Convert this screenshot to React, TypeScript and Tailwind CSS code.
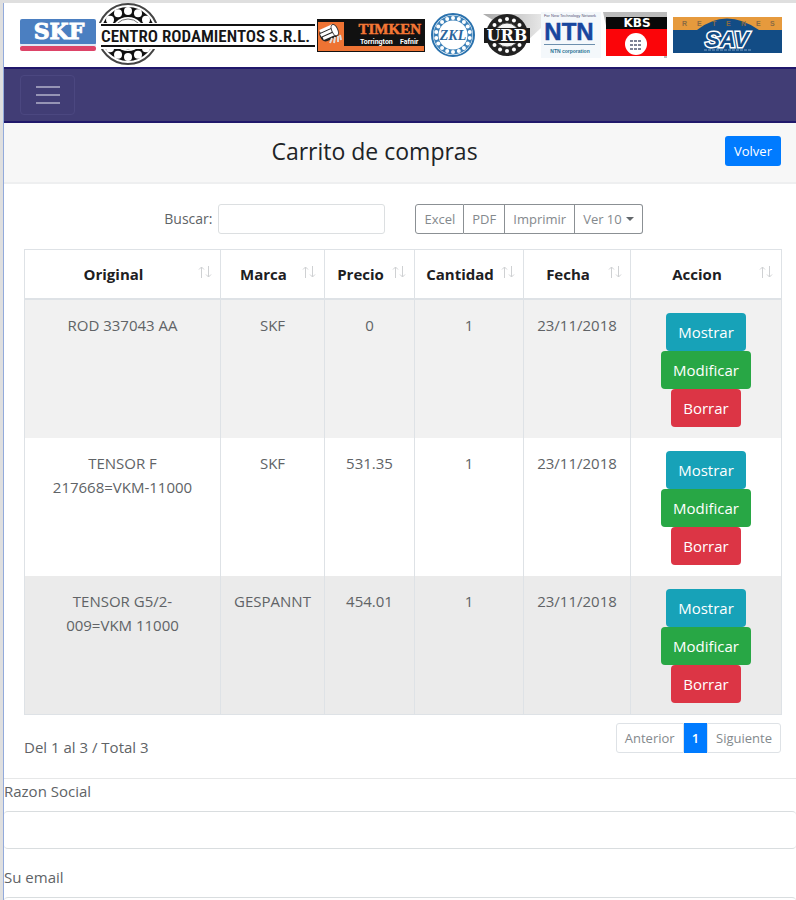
import React from "react";

const rows = [
  { original: ["ROD 337043 AA"], marca: "SKF", precio: "0", cantidad: "1", fecha: "23/11/2018", shade: "bg-[#f1f1f1]" },
  { original: ["TENSOR F 217668=VKM-11000"], marca: "SKF", precio: "531.35", cantidad: "1", fecha: "23/11/2018", shade: "bg-white" },
  { original: ["TENSOR G5/2-", "009=VKM 11000"], marca: "GESPANNT", precio: "454.01", cantidad: "1", fecha: "23/11/2018", shade: "bg-[#ebebeb]" },
];

const columns = [
  { title: "Original", width: "w-[196px]" },
  { title: "Marca", width: "w-[104px]" },
  { title: "Precio", width: "w-[90px]" },
  { title: "Cantidad", width: "w-[109px]" },
  { title: "Fecha", width: "w-[107px]" },
  { title: "Accion", width: "w-[151px]" },
];

type RingProps = { cx: number; cy: number; r: number; count: number; ball: number };

function Balls({ cx, cy, r, count, ball }: RingProps) {
  return (
    <>
      {Array.from({ length: count }, (_, i) => {
        const a = (i / count) * Math.PI * 2 + Math.PI / 2;
        return <circle key={i} cx={cx + r * Math.cos(a)} cy={cy + r * Math.sin(a)} r={ball} fill="#fff" />;
      })}
    </>
  );
}

function SkfLogo() {
  return (
    <svg width="77" height="34" viewBox="0 0 77 34" role="img" aria-label="SKF">
      <rect x="0" y="1" width="76" height="26" rx="2" fill="#4b7fc1" />
      <rect x="0" y="28" width="76" height="5" rx="2" fill="#dd4468" />
      <rect x="0" y="26" width="76" height="2" fill="#dfe9f5" />
      <text x="39" y="21" textAnchor="middle" fontFamily="'DejaVu Serif', serif" fontWeight="700" fontSize="22" fill="#fff" stroke="#fff" strokeWidth="1">SKF</text>
    </svg>
  );
}

function CentroLogo() {
  return (
    <svg width="217" height="66" viewBox="0 0 217 66" role="img" aria-label="Centro Rodamientos S.R.L.">
      <circle cx="29" cy="32" r="30" fill="#fff" stroke="#444" strokeWidth="2" />
      <circle cx="29" cy="32" r="22" fill="none" stroke="#111" strokeWidth="10" />
      <Balls cx={29} cy={32} r={23} count={14} ball={4} />
      <circle cx="29" cy="32" r="15" fill="none" stroke="#777" strokeWidth="1" />
      <rect x="0" y="21" width="217" height="26" fill="#fff" />
      <rect x="2" y="22" width="214" height="2" fill="#111" />
      <rect x="2" y="43" width="214" height="2" fill="#111" />
      <text x="2" y="40" fontFamily="'Roboto Condensed', Roboto, sans-serif" fontWeight="600" fontSize="17" fill="#161616">CENTRO RODAMIENTOS S.R.L.</text>
    </svg>
  );
}

function TimkenLogo() {
  return (
    <svg width="108" height="33" viewBox="0 0 108 33" role="img" aria-label="Timken">
      <rect width="108" height="33" fill="#111" />
      <rect x="1" y="3" width="26" height="26" fill="#ee7333" />
      <rect x="1" y="27" width="106" height="5" fill="#ee7333" />
      <g transform="rotate(-24 14 15)">
        <rect x="3" y="7" width="18" height="13" rx="5" fill="#222" />
        <path d="M5 8h14M4 12h15M5 16h13" stroke="#fff" strokeWidth="3" />
        <ellipse cx="19" cy="13" rx="3" ry="6" fill="#fff" stroke="#333" />
      </g>
      <path d="M13 24l2-5M17 24l1-6M21 23v-6M24 21l-1-5" stroke="#ddd" strokeWidth="2" />
      <text x="104" y="15" textAnchor="end" fontFamily="'Liberation Serif', serif" fontWeight="700" fontSize="15" fill="#f47735" stroke="#f47735" strokeWidth="0.5">TIMKEN</text>
      <text x="43" y="25" fontFamily="Roboto, sans-serif" fontWeight="700" fontSize="7" fill="#fff">Torrington</text>
      <text x="83" y="25" fontFamily="Roboto, sans-serif" fontWeight="700" fontSize="7" fill="#fff">Fafnir</text>
    </svg>
  );
}

function ZklLogo() {
  return (
    <svg width="44" height="44" viewBox="0 0 44 44" role="img" aria-label="ZKL">
      <circle cx="22" cy="22" r="21" fill="#fff" stroke="#2a72ae" strokeWidth="2" />
      <circle cx="22" cy="22" r="17" fill="none" stroke="#3e82b9" strokeWidth="5" />
      <Balls cx={22} cy={22} r={17} count={18} ball={2} />
      <text x="22" y="27" textAnchor="middle" fontFamily="'Liberation Serif', serif" fontStyle="italic" fontWeight="700" fontSize="14" fill="#2a659c">ZKL</text>
    </svg>
  );
}

function UrbLogo() {
  return (
    <svg width="58" height="46" viewBox="0 0 58 46" role="img" aria-label="URB">
      <defs>
        <linearGradient id="urbShade" x1="0" x2="1" y1="0" y2="0">
          <stop offset="0" stopColor="#aaa" />
          <stop offset="1" stopColor="#e6e6e6" />
        </linearGradient>
      </defs>
      <path d="M0 2H58V16L44 29Z" fill="url(#urbShade)" />
      <circle cx="24" cy="23" r="21" fill="#222" />
      <Balls cx={24} cy={23} r={16} count={14} ball={2} />
      <circle cx="24" cy="23" r="12" fill="#f4f4f4" stroke="#555" />
      <rect x="1" y="16" width="46" height="15" fill="#1b1b1b" />
      <text x="24" y="29" textAnchor="middle" fontFamily="'DejaVu Serif', serif" fontWeight="700" fontSize="16" fill="#fff">URB</text>
    </svg>
  );
}

function NtnLogo() {
  return (
    <svg width="60" height="46" viewBox="0 0 60 46" role="img" aria-label="NTN">
      <rect width="60" height="46" fill="#f4f8fb" />
      <text x="29" y="5" textAnchor="middle" fontFamily="'Liberation Sans', sans-serif" fontSize="4" fill="#557">For New Technology Network</text>
      <text x="28" y="28" textAnchor="middle" fontFamily="'Liberation Sans', sans-serif" fontWeight="700" fontSize="24" fill="#18469e" stroke="#18469e" strokeWidth="0.5">NTN</text>
      <rect x="3" y="32" width="51" height="1" fill="#6d8fad" />
      <text x="29" y="41" textAnchor="middle" fontFamily="'Liberation Sans', sans-serif" fontWeight="700" fontSize="5" fill="#2b7394">NTN corporation</text>
    </svg>
  );
}

function KbsLogo() {
  return (
    <svg width="66" height="46" viewBox="0 0 66 46" role="img" aria-label="KBS">
      <path d="M0 0H64V46H61V6H4V18Z" fill="#bbb" />
      <rect x="3" y="5" width="61" height="12" fill="#080808" />
      <rect x="3" y="17" width="61" height="27" fill="#fb0509" />
      <text x="34" y="15" textAnchor="middle" fontFamily="'DejaVu Sans', sans-serif" fontWeight="700" fontSize="12" fill="#fff">KBS</text>
      <circle cx="33" cy="32" r="11" fill="#fff" />
      <path d="M27 29h11M27 33h12M27 37h11" stroke="#7d8396" strokeWidth="2" strokeDasharray="3 1" />
    </svg>
  );
}

function SavLogo() {
  return (
    <svg width="109" height="36" viewBox="0 0 109 36" role="img" aria-label="Retenes SAV">
      <rect width="109" height="36" fill="#124c85" />
      <rect width="109" height="13" fill="#e69a3d" />
      <path d="M24 13Q53-10 86 13Z" fill="#124c85" />
      <g fontFamily="'Liberation Sans', sans-serif" fontWeight="700" fontSize="7" fill="#8a6b43">
        <text x="9" y="9">R</text>
        <text x="24" y="9">E</text>
        <text x="39" y="9">T</text>
        <text x="53" y="9">E</text>
        <text x="68" y="9">N</text>
        <text x="83" y="9">E</text>
        <text x="97" y="9">S</text>
      </g>
      <text x="54" y="30" textAnchor="middle" fontFamily="'Liberation Sans', sans-serif" fontStyle="italic" fontWeight="700" fontSize="22" fill="#124c85" stroke="#fff" strokeWidth="3" paintOrder="stroke">SAV</text>
      <path d="M31 33h48" stroke="#7aa1c9" strokeDasharray="3 1" />
    </svg>
  );
}

function SortIcon() {
  return (
    <svg width="14" height="12" viewBox="0 0 14 12" fill="none" stroke="#cfd1d3" aria-hidden="true">
      <path d="M3.5 12V1M1 3.5L3.5 1L6 3.5M10.5 0V11M8 8.5L10.5 11L13 8.5" />
    </svg>
  );
}

const toolButton = "h-[30px] border border-[#8b9094] px-2 text-[13px] text-[#84898d]";
const action = "h-[38px] rounded px-3 text-[15px] font-medium text-white";
const cell = "border-x border-[#dee2e6] px-2 pt-[13px] pb-[11px] align-top";
const field = "block h-[38px] w-full rounded border-y border-[#d9dddf] bg-white px-3";

export default function App() {
  return (
    <div className="h-screen overflow-hidden border-t-[3px] border-l-[3px] border-[#dfdfdf] bg-white font-['Open_Sans','Noto_Sans',sans-serif] text-[15px] leading-6 text-[#606366]">
      <div className="min-h-screen border-l border-[#92aadb]">
        <header className="flex h-16 items-center pl-4">
          <SkfLogo />
          <div className="ml-0.5 shrink-0"><CentroLogo /></div>
          <div className="ml-px flex shrink-0 items-center">
            <TimkenLogo />
            <div className="ml-1.5"><ZklLogo /></div>
            <div className="ml-2"><UrbLogo /></div>
            <NtnLogo />
            <div className="ml-0.5"><KbsLogo /></div>
            <div className="ml-1"><SavLogo /></div>
          </div>
        </header>

        <nav className="flex h-14 items-center border-y-2 border-[#20186b] bg-[#413d75] pl-4">
          <button aria-label="Menu" className="flex h-10 w-[55px] flex-col items-center justify-center gap-1.5 rounded border border-[#4b4780]">
            <span className="h-0.5 w-6 bg-[#9694b5]" />
            <span className="h-0.5 w-6 bg-[#9694b5]" />
            <span className="h-0.5 w-6 bg-[#9694b5]" />
          </button>
        </nav>

        <section>
          <div className="flex h-[61px] items-center border-b-2 border-[#eeeff0] bg-[#f7f7f7] pr-[15px] pb-1 pl-5">
            <h1 className="flex-1 text-center text-[23px] font-medium text-[#202326]">Carrito de compras</h1>
            <button className="h-[30px] w-14 rounded-[3px] bg-[#007bff] text-[13px] font-medium text-white">Volver</button>
          </div>

          <div className="pt-5 pr-[15px] pl-5">
            <div className="flex flex-wrap items-center justify-center gap-x-[30px] pl-0.5">
              <label className="flex items-center gap-1.5 text-sm">
                Buscar:
                <input type="search" className="h-[30px] w-[167px] rounded-[3px] border border-[#dcdfe1] px-2" />
              </label>
              <div className="flex">
                <button className={toolButton + " rounded-l-[3px]"}>Excel</button>
                <button className={toolButton + " border-l-0"}>PDF</button>
                <button className={toolButton + " border-l-0"}>Imprimir</button>
                <button className={toolButton + " flex items-center gap-1 rounded-r-[3px] border-l-0"}>
                  Ver 10
                  <svg width="8" height="4" viewBox="0 0 8 4" aria-hidden="true"><path d="M0 0h8L4 4Z" fill="#62676b" /></svg>
                </button>
              </div>
            </div>

            <table className="mt-[15px] w-full table-fixed border-collapse border border-[#dee2e6] text-center">
              <thead>
                <tr>
                  {columns.map((c) => (
                    <th key={c.title} className={c.width + " border border-b-2 border-[#dee2e6] p-0 font-bold text-[#1d2022]"}>
                      <div className="flex h-12 items-center">
                        <span className="flex-1 pl-1">{c.title}</span>
                        <span className="pr-2 pb-1"><SortIcon /></span>
                      </div>
                    </th>
                  ))}
                </tr>
              </thead>
              <tbody>
                {rows.map((r) => (
                  <tr key={r.original[0]} className={r.shade}>
                    <td className={cell}>
                      <div className="px-3">
                        {r.original.map((part, i) => (
                          <React.Fragment key={part}>{i > 0 && <wbr />}{part}</React.Fragment>
                        ))}
                      </div>
                    </td>
                    <td className={cell}>{r.marca}</td>
                    <td className={cell}>{r.precio}</td>
                    <td className={cell}>{r.cantidad}</td>
                    <td className={cell}>{r.fecha}</td>
                    <td className={cell}>
                      <div className="flex flex-col items-center">
                        <button className={action + " bg-[#17a2b8]"}>Mostrar</button>
                        <button className={action + " bg-[#28a745]"}>Modificar</button>
                        <button className={action + " bg-[#dc3545]"}>Borrar</button>
                      </div>
                    </td>
                  </tr>
                ))}
              </tbody>
            </table>

            <div className="flex h-[63px] items-start justify-between">
              <p className="pt-5">Del 1 al 3 / Total 3</p>
              <nav aria-label="Paginas" className="mt-2 flex h-[30px] text-[13px] text-[#84898d]">
                <button className="rounded-l-[3px] border border-[#dee2e6] px-2">Anterior</button>
                <button aria-current="page" className="bg-[#007bff] px-2 font-semibold text-white">1</button>
                <button className="rounded-r-[3px] border border-[#dee2e6] px-2">Siguiente</button>
              </nav>
            </div>
          </div>
        </section>

        <form className="border-t border-[#e6e7e8]">
          <label htmlFor="razon" className="block pb-2">Razon Social</label>
          <input id="razon" type="text" className={field} />
          <label htmlFor="email" className="mt-4 block pb-2">Su email</label>
          <input id="email" type="email" className={field} />
        </form>
      </div>
    </div>
  );
}
